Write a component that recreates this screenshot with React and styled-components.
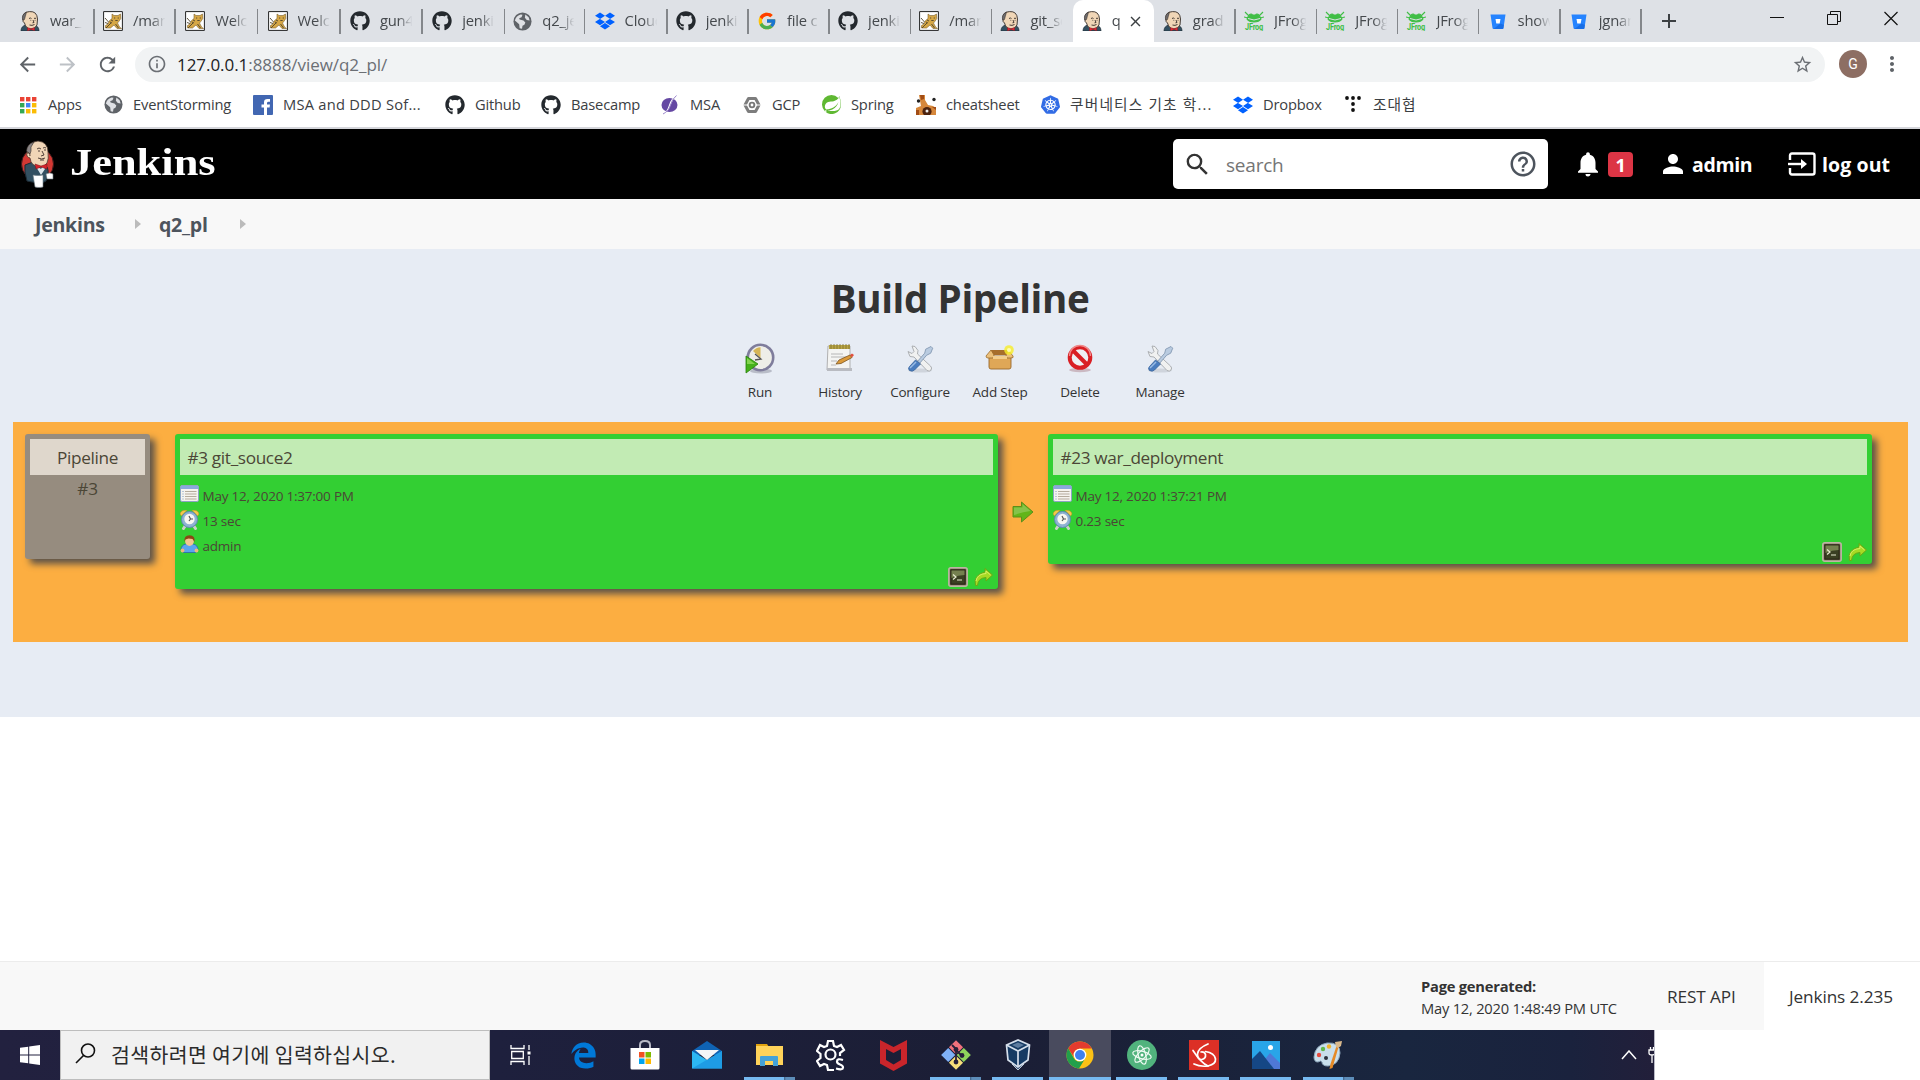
import React from "react";
import styled, { createGlobalStyle } from "styled-components";
import { FaGithub, FaDropbox, FaEdgeLegacy } from "react-icons/fa";
import { FcGoogle } from "react-icons/fc";
import { SiKubernetes, SiSpring } from "react-icons/si";
import {
  MdSearch, MdHelpOutline, MdNotifications, MdPerson, MdStarBorder, MdInfoOutline,
  MdRefresh, MdArrowBack, MdArrowForward, MdMoreVert, MdClose, MdAdd,
} from "react-icons/md";

const GlobalStyle = createGlobalStyle`
  * { box-sizing: border-box; }
  html, body { margin: 0; padding: 0; }
  body {
    background: #fff;
    color: #333;
    font-family: "Open Sans", "Noto Sans CJK KR", sans-serif;
    letter-spacing: -0.013em;
    overflow: hidden;
  }
  svg { display: block; flex: none; }
`;

const Screen = styled.div`
  width: 1920px;
  height: 1080px;
  display: flex;
  flex-direction: column;
  overflow: hidden;
`;

/* ---------- browser chrome ---------- */

const TabStrip = styled.div`
  height: 42px;
  flex: none;
  display: flex;
  background: #dee1e6;
  padding-left: 12px;
`;

const Tab = styled.div`
  width: ${(p) => (p.$wide ? 82.3 : 81.2)}px;
  height: 42px;
  flex: none;
  display: flex;
  align-items: center;
  gap: 10px;
  padding-left: ${(p) => (p.$first ? 8 : 8.7)}px;
  font-size: 14.8px;
  color: #45494d;
  border-radius: ${(p) => (p.$active ? "10px 10px 0 0" : "0")};
  background: ${(p) => (p.$active ? "#fff" : "transparent")};
`;

const TabTitle = styled.span`
  width: ${(p) => (p.$short ? 9 : 33)}px;
  flex: none;
  overflow: hidden;
  white-space: nowrap;
  line-height: 22px;
  margin-bottom: 2px;
  mask-image: linear-gradient(90deg, #000 ${(p) => (p.$short ? 80 : 55)}%, transparent 98%);
`;

const TabRule = styled.i`
  width: 1.5px;
  height: 25px;
  margin-left: ${(p) => (p.$first ? 0 : -1.5)}px;
  flex: none;
  background: ${(p) => (p.$hidden ? "transparent" : "#84878b")};
`;

const TabClose = styled(MdClose)`
  width: 17px;
  height: 17px;
  margin-left: -4px;
  color: #3c4043;
`;

const NewTab = styled(MdAdd)`
  width: 24px;
  height: 24px;
  margin: 9px 0 0 16px;
  color: #3c4043;
`;

const WindowButtons = styled.div`
  flex: 1;
  display: flex;
  justify-content: flex-end;
  align-items: flex-start;
  gap: 43px;
  padding: 11px 22px 0 0;
`;

const Toolbar = styled.div`
  height: 44px;
  flex: none;
  display: flex;
  align-items: center;
  padding-left: 16px;
  color: #5f6368;
`;

const NavButtons = styled.div`
  width: 119px;
  display: flex;
  gap: 17px;
  svg { width: 23px; height: 23px; }
  svg:nth-child(2) { color: #bdc1c6; }
`;

const Omnibox = styled.div`
  width: 1690px;
  height: 35px;
  display: flex;
  align-items: center;
  border-radius: 18px;
  background: #f1f3f4;
  padding: 0 12px;
  font-size: 17px;
  letter-spacing: -0.003em;
  color: #6b6f74;
  b { font-weight: 400; color: #202124; }
`;

const Url = styled.span`
  flex: 1;
  padding-left: 10px;
`;

const Avatar = styled.div`
  width: 28px;
  height: 28px;
  margin: 0 13px 0 14px;
  border-radius: 50%;
  background: #8d6e63;
  color: #fff;
  font: 14px/28px Roboto, sans-serif;
  text-align: center;
`;

const BookmarkBar = styled.div`
  height: 41px;
  flex: none;
  display: flex;
  padding: 0 0 4px 18px;
  font-size: 14.7px;
  color: #3c4043;
`;

const Bookmark = styled.div`
  width: ${(p) => p.$w}px;
  flex: none;
  display: flex;
  align-items: center;
  gap: 10px;
  white-space: nowrap;
  letter-spacing: ${(p) => p.$ls ?? -0.013}em;
`;

const BookmarkLabel = styled.span`
  padding-bottom: 2px;
`;

/* ---------- Jenkins ---------- */

const Header = styled.header`
  height: 72px;
  flex: none;
  display: flex;
  align-items: center;
  border-top: 2px solid #d5d6db;
  background: #000;
  color: #fff;
  padding-left: 20px;
`;

const Wordmark = styled.span`
  flex: 1;
  padding: 0 0 2px 16px;
  font: bold 37px/44px "Liberation Serif", serif;
  letter-spacing: 0;
  span { display: inline-block; transform: scaleX(1.2); transform-origin: left; }
`;

const SearchBox = styled.div`
  width: 375px;
  height: 50px;
  display: flex;
  align-items: center;
  border-radius: 5px;
  background: #fff;
  color: #333;
  padding: 0 10px;
`;

const Placeholder = styled.span`
  flex: 1;
  padding: 1px 0 0 14px;
  font-size: 19px;
  color: #757575;
`;

const HeaderLink = styled.div`
  width: ${(p) => p.$w}px;
  display: flex;
  align-items: center;
  gap: ${(p) => p.$gap}px;
  font-size: 19.5px;
  font-weight: 700;
  white-space: nowrap;
  letter-spacing: ${(p) => p.$ls ?? -0.018}em;
`;

const LinkText = styled.span`
  padding-top: 1px;
`;

const Spacer = styled.i`
  width: 20px;
`;

const Count = styled.span`
  width: 25px;
  height: 25px;
  border-radius: 4px;
  background: #dc3545;
  font-size: 18px;
  line-height: 26px;
  text-align: center;
`;

const Breadcrumbs = styled.nav`
  height: 50px;
  flex: none;
  display: flex;
  align-items: center;
  background: #f8f8f8;
  padding-left: 35px;
  font-size: 19.6px;
  font-weight: 700;
  letter-spacing: -0.014em;
  color: #4d545d;
`;

const Crumb = styled.span`
  width: ${(p) => p.$w}px;
  padding-top: 1px;
`;

const Caret = styled.i`
  width: 6px;
  margin-right: ${(p) => p.$gap || 0}px;
  border: solid transparent;
  border-width: 5px 0 5px 6px;
  border-left-color: #bbb;
`;

const Main = styled.main`
  height: 468px;
  flex: none;
  display: flex;
  flex-direction: column;
  align-items: center;
  background: #e7ecf4;
`;

const Title = styled.h1`
  margin: 20px 0 0;
  font-size: 38.6px;
  line-height: 58px;
  letter-spacing: -0.01em;
`;

const Actions = styled.div`
  display: flex;
  margin-top: 16px;
  height: 79px;
`;

const Action = styled.div`
  width: 80px;
  display: flex;
  flex-direction: column;
  align-items: center;
  gap: 7px;
  font-size: 13.5px;
  line-height: 20px;
`;

const Board = styled.section`
  width: 1895px;
  height: 220px;
  display: flex;
  align-items: flex-start;
  background: #fcae41;
  padding: 12px;
  margin-left: 1px;
`;

const Card = styled.article`
  width: ${(p) => p.$w}px;
  height: ${(p) => p.$h}px;
  flex: none;
  display: flex;
  flex-direction: column;
  border-radius: 3px;
  padding: 5px 5px 2px;
  background: ${(p) => (p.$idle ? "#968c7f" : "#33cf33")};
  text-align: ${(p) => (p.$idle ? "center" : "left")};
  margin-right: ${(p) => p.$gap || 0}px;
  box-shadow: 5px 5px 7px #5b5249;
  color: #4b4636;
`;

const CardTitle = styled.div`
  height: 36px;
  background: ${(p) => (p.$idle ? "#dfd7cc" : "#c2ebb4")};
  padding: 0 ${(p) => (p.$idle ? 0 : 7.5)}px;
  font-size: 17.2px;
  line-height: 37px;
  letter-spacing: -0.02em;
`;

const CardNote = styled.div`
  font-size: 17.2px;
  line-height: 27px;
`;

const Details = styled.div`
  flex: 1;
  padding-top: 9px;
`;

const Detail = styled.div`
  height: 25px;
  display: flex;
  gap: 3.5px;
  font-size: 13.5px;
  line-height: 25px;
  letter-spacing: -0.016em;
  svg { margin-top: 1px; }
`;

const CardTools = styled.div`
  display: flex;
  justify-content: flex-end;
  gap: 6px;
`;

const Connector = styled.div`
  width: 50px;
  height: 155px;
  display: flex;
  align-items: center;
  padding-left: 14px;
`;

const Blank = styled.div`
  height: 244px;
  flex: none;
`;

const Footer = styled.footer`
  height: 69px;
  flex: none;
  display: flex;
  align-items: center;
  border-top: 1px solid #ececec;
  background: #f8f8f8;
  font-size: 17.2px;
  font-weight: 500;
  letter-spacing: -0.006em;
`;

const Generated = styled.div`
  width: 246px;
  margin-left: 1421px;
  padding-top: 1px;
  font-size: 14.7px;
  font-weight: 400;
  line-height: 22px;
  letter-spacing: -0.015em;
`;

const RestLink = styled.div`
  width: 97px;
  padding-top: 1px;
  white-space: nowrap;
`;

const Version = styled.div`
  flex: 1;
  align-self: stretch;
  background: #fff;
  padding-left: 25px;
  line-height: 70px;
  white-space: nowrap;
`;

/* ---------- taskbar ---------- */

const Taskbar = styled.div`
  width: 1655px;
  height: 50px;
  flex: none;
  display: flex;
  background: linear-gradient(90deg, #22213f 0%, #1e203d 30%, #1b1e35 60%, #19263f 85%, #1a223d 95%, #221f3a 100%);
  border-right: 1px solid #b9bac6;
  overflow: hidden;
`;

const Start = styled.div`
  width: 60px;
  flex: none;
  display: flex;
  align-items: center;
  justify-content: center;
`;

const TaskSearch = styled.div`
  width: 430px;
  flex: none;
  display: flex;
  align-items: center;
  gap: 15px;
  background: #f1f1f1;
  border: 1px solid #bdbdbd;
  padding: 0 0 3px 14px;
  font: 20.5px "Noto Sans CJK KR", sans-serif;
  letter-spacing: 0.36px;
  color: #2b2b2b;
`;

const TaskItem = styled.div`
  width: 62.08px;
  height: 50px;
  flex: none;
  display: flex;
  flex-direction: column;
  align-items: center;
  background: ${(p) => (p.$active ? "#494b5e" : "transparent")};
`;

const TaskIcon = styled.div`
  height: 47px;
  display: flex;
  align-items: center;
  padding-top: 3px;
`;

const Underline = styled.div`
  width: ${(p) => (p.$active ? 62 : 51)}px;
  height: 3px;
  background: ${(p) => (p.$stacked ? "linear-gradient(90deg, #76b9f0 40px, #3f5f83 40px, #5d8db9 42px)" : "#76b9f0")};
`;

const Tray = styled.div`
  flex: 1;
  min-width: 0;
  display: flex;
  align-items: center;
  gap: 11px;
  padding-left: 262px;
`;

/* ---------- drawings ---------- */

const ButlerHead = () => (
  <svg width="20" height="20" viewBox="0 0 20 20">
    <path d="M1 20q0-5 5-6l8 0q5 1 5 6z" fill="#335061" stroke="#1d2b35" strokeWidth=".7" />
    <path d="M3 8Q2 1 9.500.6 17 0 17.500 8l-.5 6q-2 4-6 4-5 0-6.500-6Q2.500 11 3 8z" fill="#f0d6b7" stroke="#332b27" strokeWidth=".9" />
    <path d="M2.600 9Q1.500 3 6.500 1.200L5.300 5.500l-.8 3z" fill="#6d6b6d" stroke="#332b27" strokeWidth=".5" />
    <path d="M9 7.500q1.500-1 2.500 0M14 7.500q1-.8 2 0M10.500 9.300h.7M14.700 9.300h.7M13 9l1 2.500-1.500.3M9.500 14q2.500 1 5-.5" fill="none" stroke="#332b27" strokeWidth=".9" />
    <path d="M7.500 16.500l3.500 1.200 3.500-1.200.2 3.300-3.700-1.200L7.500 20z" fill="#e02b35" stroke="#81171e" strokeWidth=".4" />
  </svg>
);

const Butler = () => (
  <svg width="34" height="48" viewBox="0 0 34 48">
    <circle cx="17.500" cy="24" r="16" fill="#d33833" stroke="#3b1b1b" />
    <path d="M7 41Q4 31 5 25l8-3 11 3q5 1 4 10l-2 6-4 2-10-1z" fill="#335061" stroke="#1d2b35" />
    <path d="M7 13Q7 2 18 1q10 1 10 11 1 7-1 11-3 5-8 4-8-1-9-9-4-1-3-5z" fill="#f0d6b7" stroke="#4b3b31" strokeWidth=".8" />
    <path d="M6.500 11Q7 4 14 2l-3 5v4l-1 3z" fill="#8b8686" stroke="#332b27" strokeWidth=".6" />
    <path d="M7 13q3-1 3 3" fill="none" stroke="#4b3b31" />
    <path d="M17 9q2-2 4 0M23 8q2-1 3 0M18 11h2M24 10h2M22 11l2 4-3 1M18 18q4 2 7 0M20 20h4" fill="none" stroke="#3d302a" strokeWidth=".9" />
    <path d="M15 25l6 4 2-3 2 3-4 6z" fill="#dce5ea" />
    <path d="M15 24l6 2 6-2v5l-6-2-5 2z" fill="#d8222a" stroke="#74151a" strokeWidth=".5" />
    <path d="M13 35q5 1 10 0l0 12q-4 1-8 0z" fill="#fff" stroke="#6c7980" strokeWidth=".6" />
    <path d="M26 34q4-2 7 0v5h-6z" fill="#fff" stroke="#6c7980" strokeWidth=".6" />
  </svg>
);

const Tomcat = () => (
  <svg width="20" height="20" viewBox="0 0 20 20">
    <path d="M.6.6h18.800v18.800H.6z" fill="#fff" stroke="#222" strokeWidth="1" />
    <path d="M9 3l2 1.500h4L17.500 3l.3 4.500-2 3-1.300 1.500 2 4 2 1.500h-4.500L11 14l-3.500 3H2.500v-2.500L5 13q1-4 4-5.500z" fill="#d6a745" stroke="#7c6230" strokeWidth=".6" />
    <path d="M2 7l3.500 4M2 11.500l3 1M3 17l5-5M12.500 13l3 4M11 7h1.200M14.700 7h1.200M12.300 9.500h2.400M8 9l2 1M7 11l2 1" stroke="#4e432c" strokeWidth=".9" />
  </svg>
);

const Frog = () => (
  <svg width="20" height="20" viewBox="0 0 20 20">
    <path d="M1 1l4 4M19 1l-4 4M0 6l4 1M20 6l-4 1M5 5q0-2 2-2 1 0 1.500 1h3Q12 3 13 3q2 0 2 2 2 1 2 3-2 3-7 3T3 8q0-2 2-3z" fill="#40be46" stroke="#40be46" strokeWidth="1.100" />
    <path d="M4 7.500q6 3 12 0" fill="none" stroke="#dee1e6" />
    <text x="10" y="18.500" textAnchor="middle" textLength="18" lengthAdjust="spacingAndGlyphs" fontFamily="Roboto, sans-serif" fontSize="8.500" fontWeight="700" fill="#40be46">JFrog</text>
  </svg>
);

const Bucket = () => (
  <svg width="20" height="20" viewBox="0 0 20 20">
    <path d="M2.500 3.500h15L15.500 17q-.1 1-1 1h-9q-.9 0-1-1z" fill="#2684ff" />
    <path d="M12.500 12.500L15.900 14l-.4 3q-.1 1-1 1h-9z" fill="#0f5fd6" opacity=".6" />
    <path d="M7.500 8h5l-.8 4.500H8.300z" fill="#fff" />
  </svg>
);

const Globe = () => (
  <svg width="19" height="19" viewBox="0 0 20 20">
    <circle cx="10" cy="10" r="9.500" fill="#5f6368" />
    <path d="M2 9q1-5 6-6.500l2 .5-1 2.500-2.500 1L7 8l4 1 2 2-1 2.500-2 1-.5 3-2.500-.5-.5-4zM13 2.500l3.500 3L17.500 9l-3-.5-2-2.500z" fill="#dfe1e5" />
  </svg>
);

const AppsGrid = () => (
  <svg width="18" height="18" viewBox="0 0 18 18">
    {["#ea4335", "#ea4335", "#ea4335", "#34a853", "#4285f4", "#fbbc05", "#34a853", "#fbbc05", "#fbbc05"].map((c, i) => (
      <rect key={i} x={1 + (i % 3) * 6} y={1 + Math.floor(i / 3) * 6} width="4.400" height="4.400" fill={c} />
    ))}
  </svg>
);

const FacebookTile = () => (
  <svg width="20" height="20" viewBox="0 0 20 20">
    <rect width="20" height="20" rx="1" fill="#4267b2" />
    <path d="M11 20v-7.500H8.500v-3H11V7.300Q11 4 14.500 4H17v2.800h-1.500q-1.500 0-1.500 1.400v1.300h3l-.4 3H14V20z" fill="#fff" />
  </svg>
);

const Planet = () => (
  <svg width="18" height="20" viewBox="0 0 18 20">
    <ellipse cx="8.500" cy="10" rx="8" ry="7" fill="#6548a3" />
    <path d="M16 0Q10 3 8 10T1 20q6-3 8-9T16 0z" fill="#fff" />
    <path d="M15.500.5Q11 4 9.500 10T2 19" fill="none" stroke="#9c88cc" strokeWidth="1" />
  </svg>
);

const CloudHex = () => (
  <svg width="18" height="18" viewBox="0 0 18 18">
    <path d="M5.500 2.500h7L16 9l-3.500 6.500h-7L2 9z" fill="none" stroke="#7d7d7d" strokeWidth="3" strokeLinejoin="round" />
    <circle cx="9" cy="9" r="3.300" fill="#777" /><circle cx="9" cy="9" r="1.400" fill="#fff" />
    <path d="M0 9h4M14 9h4" stroke="#fff" strokeWidth="1" />
  </svg>
);

const Giraffe = () => (
  <svg width="20" height="20" viewBox="0 0 20 20">
    <path d="M3 0h6v5l3 5 5 1 3 2v7H0v-7l5-2z" fill="#d6873b" />
    <path d="M4 0h4v4L5 5zM0 15h3v5H0zM16 12h4v3z" fill="#a24d16" />
    <circle cx="11" cy="16.500" r="4.600" fill="#4d230e" /><circle cx="11" cy="16" r="1.500" fill="#eee" />
    <circle cx="2.500" cy="6" r="1.700" fill="#222" /><circle cx="18" cy="4.500" r="1.700" fill="#222" />
  </svg>
);

const DotsT = () => (
  <svg width="16" height="17" viewBox="0 0 16 17">
    {[[2, 2], [8, 2], [14, 2], [8, 8], [8, 14]].map(([x, y]) => <circle key={`${x}-${y}`} cx={x} cy={y} r="1.900" fill="#111" />)}
  </svg>
);

const LogoutIcon = () => (
  <svg width="28" height="24" viewBox="0 0 28 24" fill="none" stroke="#fff" strokeWidth="2.400">
    <path d="M2 8V3.500Q2 1.500 4 1.500h20.500q2 0 2 2v17q0 2-2 2H4q-2 0-2-2V16" />
    <path d="M0 12h15" /><path d="M13 7l6 5-6 5z" fill="#fff" stroke="none" />
  </svg>
);

const RunIcon = () => (
  <svg width="32" height="32" viewBox="0 0 32 32">
    <ellipse cx="17" cy="28" rx="11" ry="2.500" fill="#b9bdc8" />
    <circle cx="16.500" cy="14.500" r="12.700" fill="#eeeee8" stroke="#7f7d9c" strokeWidth="2.600" />
    <path d="M16.500 15L9 8q3-3.500 7.500-3.700z" fill="#d6b656" />
    <path d="M11 11l6 5-6 1" stroke="#555" strokeWidth="1.300" fill="none" />
    <path d="M2 13l12 8-12 9z" fill="#45b11a" stroke="#278109" strokeWidth=".8" />
    <path d="M3 15l8 6H3z" fill="#83d44f" />
  </svg>
);

const HistoryIcon = () => (
  <svg width="32" height="32" viewBox="0 0 32 32">
    <path d="M4 3h22v24H3z" fill="#f4f4f2" stroke="#b0b0b0" />
    <path d="M3 25h25v3H3z" fill="#b9bbc1" />
    <path d="M5 2h21v4H5z" fill="#b9a544" /><path d="M7 1v5M10 1v5M13 1v5M16 1v5M19 1v5M22 1v5M25 1v5" stroke="#7c7030" strokeWidth=".8" />
    <path d="M7 11h12M7 14h15M7 18h6M7 22h5" stroke="#b5b5b5" strokeWidth="1.200" />
    <path d="M12 21l3-4 11-5 2 2.500-11 6z" fill="#db9a3a" stroke="#7c531d" strokeWidth=".8" />
    <path d="M26 12l2-1.500 2 1.500-2 2.500z" fill="#e0503d" />
  </svg>
);

const ToolsIcon = () => (
  <svg width="32" height="32" viewBox="0 0 32 32">
    <ellipse cx="16" cy="27.500" rx="12" ry="2" fill="#cfd4dc" />
    <path d="M8 3l3 .5 3 4-.5 3.500 13 12q2 2 .5 4t-4 .5L10 14l-4-.5-2-5 4 2 2-2z" fill="#f0f1f1" stroke="#a5a8ac" strokeWidth=".9" />
    <path d="M27 3.500l1.700 1.700-2 5-4 2-7 8-2-2 7-8 1-4z" fill="#b9cbe0" stroke="#8398b2" strokeWidth=".9" />
    <path d="M11.500 17l5 4-6 6q-2 2-5 .5-2-2 0-4z" fill="#4a7dbf" stroke="#3a659c" strokeWidth=".8" />
    <path d="M12 19l-6 6" stroke="#9abce6" strokeWidth="1.500" />
  </svg>
);

const BoxIcon = () => (
  <svg width="32" height="32" viewBox="0 0 32 32">
    <path d="M5 13h22v11q0 2-2 2H7q-2 0-2-2z" fill="#dfa757" stroke="#9a692a" strokeWidth=".9" />
    <path d="M7 7h16l2 5H7z" fill="#a76e2c" />
    <path d="M7 7L2 13q0 2 2 2h5l1-3zM24 7l5 6q1 2-2 2h-4l-1-3z" fill="#ecc07a" stroke="#9a692a" strokeWidth=".8" />
    <path d="M9 13h14v3H9z" fill="#f2cd8d" />
    <circle cx="25" cy="7" r="4.800" fill="#f8ee27" opacity=".8" /><circle cx="25" cy="7" r="2" fill="#fffbb0" />
  </svg>
);

const StopIcon = () => (
  <svg width="32" height="32" viewBox="0 0 32 32">
    <ellipse cx="16" cy="27" rx="11" ry="2.200" fill="#cbb9c2" />
    <circle cx="16" cy="14.500" r="10.300" fill="#eef0f3" stroke="#d91f24" strokeWidth="4" />
    <path d="M9 7.500l14 14" stroke="#d91f24" strokeWidth="4" />
    <path d="M5.500 13A10.500 10.500 0 0 1 26.500 13" fill="none" stroke="#f08a8a" strokeWidth="1.300" />
  </svg>
);

const NotepadIcon = () => (
  <svg width="19" height="18" viewBox="0 0 19 18">
    <rect x=".5" y=".5" width="18" height="16" rx="1.500" fill="#f5f3ee" stroke="#8ca4c4" />
    <path d="M1 1h17v3H1z" fill="#8aa9dc" />
    <path d="M5 6.500h11.500M5 9h11.500M5 11.500h11.500M5 14h11.500" stroke="#b5ac9d" strokeWidth="1.100" />
    <path d="M2.500 6.500h1M2.500 9h1M2.500 11.500h1M2.500 14h1" stroke="#7797bf" strokeWidth="1.200" />
  </svg>
);

const ClockIcon = () => (
  <svg width="19" height="20" viewBox="0 0 19 20">
    <path d="M0 4Q1-.5 7 .3L1.500 6zM19 4Q18-.5 12 .3L17.500 6z" fill="#f2c84b" stroke="#c79422" strokeWidth=".6" />
    <path d="M3.500 18.500l2-3M15.500 18.500l-2-3" stroke="#c9d1c7" strokeWidth="3" strokeLinecap="round" />
    <circle cx="9.500" cy="9.500" r="8" fill="#8fb2d3" stroke="#5e88b2" />
    <circle cx="9.500" cy="9" r="5.200" fill="#f7f7f2" />
    <path d="M9 6l1.500 3-1.500 2M10.500 9H13" stroke="#555" strokeWidth="1.200" fill="none" />
  </svg>
);

const UserIcon = () => (
  <svg width="19" height="19" viewBox="0 0 19 19">
    <path d="M1 15q0-5 5-6h7q5 1 5 6l-2 2.500H3z" fill="#5aa4ee" stroke="#2a67ad" strokeWidth=".8" />
    <circle cx="2.500" cy="15.500" r="1.900" fill="#edb77c" /><circle cx="16.500" cy="15.500" r="1.900" fill="#edb77c" />
    <ellipse cx="9.500" cy="6" rx="4.400" ry="4.900" fill="#f3c591" />
    <path d="M4.500 7Q3.500.5 9.500.3q6 .2 5 6.700l-2-3-4-.5-3 1z" fill="#8b4715" />
  </svg>
);

const ConsoleIcon = () => (
  <svg width="20" height="20" viewBox="0 0 20 20">
    <rect x=".8" y=".8" width="18.400" height="18.400" rx="2" fill="#8c8068" stroke="#beb4a6" strokeWidth="1.500" />
    <rect x="2.800" y="2.800" width="14.400" height="14.400" fill="#3a3f22" stroke="#241d12" />
    <path d="M3.500 3.500h13V8q-6 0-13 3z" fill="#75804f" />
    <path d="M5 7.500l3 2.500-3 2.500M9 13h5" fill="none" stroke="#e8ebd1" strokeWidth="1.200" />
  </svg>
);

const RedoIcon = () => (
  <svg width="19" height="20" viewBox="0 0 19 20">
    <path d="M1.500 18.500Q-1 8 11 5V1.500L18.500 8 12 14v-3.500Q4 11 3.500 18.500z" fill="#a7da24" stroke="#69a815" />
    <path d="M2 14Q3 7 12 6.500V4l4.500 4" fill="none" stroke="#d8ef65" strokeWidth="1" />
  </svg>
);

const FlowArrow = () => (
  <svg width="23" height="24" viewBox="0 0 23 24">
    <path d="M1 6.500h8.500V2L21 12 9.500 22v-5H1z" fill="#62b519" stroke="#5f8c1b" />
    <path d="M2 7.500h8.500V4l8 7q-8 1-16.500 4z" fill="#92c85b" opacity=".75" />
  </svg>
);

const WindowsLogo = () => (
  <svg width="20" height="20" viewBox="0 0 20 20" fill="#fff">
    <path d="M0 2.800L8.200 1.700v7.800H0zM9.200 1.500L20 0v9.500H9.200zM0 10.500h8.200v7.800L0 17.200zM9.200 10.500H20V20L9.200 18.500z" />
  </svg>
);

const TaskLens = () => (
  <svg width="21" height="21" viewBox="0 0 21 21" fill="none" stroke="#111" strokeWidth="1.600">
    <circle cx="13" cy="7.500" r="6.500" /><path d="M8.500 12.500L1 20" />
  </svg>
);

const TaskViewIcon = () => (
  <svg width="22" height="20" viewBox="0 0 22 20" fill="none" stroke="#fff" strokeWidth="1.300">
    <path d="M1 0v3.500h13V0M1 20v-3.500h13V20M1.700 6.500h11.600v7H1.700zM19 0v5M19 11v9" /><path d="M17.500 6.500h3v3h-3z" fill="#fff" stroke="none" />
  </svg>
);

const StoreIcon = () => (
  <svg width="30" height="30" viewBox="0 0 30 30">
    <path d="M10 9V5q0-4 5-4t5 4v4" fill="none" stroke="#b9bac6" strokeWidth="2" />
    <path d="M.5 8h29v20q0 1.500-1.500 1.500H2Q.5 29.500.5 28z" fill="#fff" />
    <path d="M9 12h5.500v5.500H9z" fill="#f25022" /><path d="M15.500 12H21v5.500h-5.500z" fill="#7fba00" />
    <path d="M9 18.500h5.500V24H9z" fill="#00a4ef" /><path d="M15.500 18.500H21V24h-5.500z" fill="#ffb900" />
  </svg>
);

const MailIcon = () => (
  <svg width="30" height="28" viewBox="0 0 30 28">
    <path d="M0 10L15 0l15 10v4H0z" fill="#0f63b4" />
    <path d="M0 10l15 9L30 10v17.500H0z" fill="#2cb7f3" /><path d="M30 10v17.500H0z" fill="#1a93e0" opacity=".75" />
    <path d="M3 9h24l-12 10z" fill="#f3f5f7" />
  </svg>
);

const FolderIcon = () => (
  <svg width="29" height="24" viewBox="0 0 29 24">
    <path d="M1 1h11l2 3H1z" fill="#e0a20f" /><path d="M1 3h27v19H1z" fill="#ffd35a" />
    <path d="M5 23V14q0-1 1-1h16q1 0 1 1v9h-5v-5h-8v5z" fill="#45a2d8" />
  </svg>
);

const SettingsGear = () => (
  <svg width="30" height="32" viewBox="0 0 30 32">
    <path d="M18 31h-6l-1-5-3-1-4 2-3-5 3.500-3v-4L1 12l3-6 4 2 3-1 1-5h5l1 5 3 1 4-2 3 5-4 3v3" fill="none" stroke="#fff" strokeWidth="2.200" />
    <circle cx="14.500" cy="15.500" r="5" fill="none" stroke="#fff" strokeWidth="2.200" />
    <path d="M27 21q-6-2-6 1.500 0 2 3 3t3 3q0 3-7 1" fill="none" stroke="#fff" strokeWidth="2.200" />
  </svg>
);

const ShieldM = () => (
  <svg width="27" height="31" viewBox="0 0 27 31">
    <path d="M0 0l13.500 7L27 0v23.500L13.500 31 0 23.500zM6 9v11l7.500 4.500L21 20V9l-7.500 4z" fill="#c9252b" fillRule="evenodd" />
  </svg>
);

const GitIcon = () => (
  <svg width="32" height="32" viewBox="0 0 32 32">
    <g transform="rotate(45 16 16)">
      <path d="M5.500 5.500h10v10h-10z" fill="#f0717c" /><path d="M16.500 5.500h10v10h-10z" fill="#8ed45c" />
      <path d="M5.500 16.500h10v10h-10z" fill="#7fb1f7" /><path d="M16.500 16.500h10v10h-10z" fill="#f7df7a" />
    </g>
    <path d="M16 10v13M16 11l6 6M12 6l4 4" stroke="#26203a" strokeWidth="1.800" /><circle cx="16" cy="10.500" r="2.400" fill="#26203a" /><circle cx="16" cy="23" r="2.400" fill="#26203a" /><circle cx="22" cy="16.500" r="2.400" fill="#26203a" />
  </svg>
);

const VirtualBoxIcon = () => (
  <svg width="26" height="32" viewBox="0 0 26 32">
    <path d="M7 25l6 6 6-6z" fill="#43597c" stroke="#b9c7d6" strokeWidth="1" />
    <path d="M1.500 6L13 1l11.500 5-1.500 15-10 7-10-7z" fill="#153a63" stroke="#d5dfeb" strokeWidth="1.700" />
    <path d="M1.500 6L13 12l11.500-6M13 12v16" fill="none" stroke="#d5dfeb" strokeWidth="1.700" />
    <path d="M7 6l6-2.500L19 6l-6 3z" fill="#5d7c9f" />
  </svg>
);

const ChromeIcon = () => (
  <svg width="28" height="28" viewBox="0 0 28 28">
    <circle cx="14" cy="14" r="13.500" fill="#fbc116" />
    <path d="M2.200 7.500A13.500 13.500 0 0 1 25.800 7.500H14a6.500 6.500 0 0 0-6.200 8.500z" fill="#e33b2e" />
    <path d="M2.200 7.300A13.500 13.500 0 0 0 13 27.500l6.300-10.300a6.500 6.500 0 0 1-11.400 0z" fill="#229f4b" />
    <circle cx="14" cy="14" r="6.300" fill="#fff" /><circle cx="14" cy="14" r="5" fill="#3f80ee" />
  </svg>
);

const AtomIcon = () => (
  <svg width="30" height="30" viewBox="0 0 30 30">
    <circle cx="15" cy="15" r="15" fill="#51b37d" />
    <g fill="none" stroke="#eefaf2" strokeWidth="1.200">
      <ellipse cx="15" cy="15" rx="9.500" ry="3.700" transform="rotate(15 15 15)" />
      <ellipse cx="15" cy="15" rx="9.500" ry="3.700" transform="rotate(75 15 15)" />
      <ellipse cx="15" cy="15" rx="9.500" ry="3.700" transform="rotate(135 15 15)" />
    </g>
    <circle cx="15" cy="15" r="1.500" fill="#fff" />
  </svg>
);

const RedSwirl = () => (
  <svg width="30" height="30" viewBox="0 0 30 30">
    <path d="M0 0h30v30H0z" fill="#dc3026" />
    <g fill="none" stroke="#fff" strokeWidth="1.700" strokeLinecap="round">
      <path d="M4 10.500Q12 23 19 26q8-2 7.500-7-1-6-10-7.500" />
      <path d="M19 4q-10 4-10.500 10 0 6 4.500 5.500 4-1 3.500-5-1-3-4.500-2.500" />
      <path d="M19 26q-8 1-14-2" />
    </g>
  </svg>
);

const PhotosIcon = () => (
  <svg width="28" height="28" viewBox="0 0 28 28">
    <path d="M0 0h28v28H0z" fill="#29a5e8" /><path d="M10 22l8-10 10 10v6H6z" fill="#4f78d6" />
    <path d="M0 18l8-8 14 18H0z" fill="#154785" /><circle cx="18.500" cy="6.500" r="2.500" fill="#fff" />
  </svg>
);

const PaintIcon = () => (
  <svg width="30" height="30" viewBox="0 0 30 30">
    <path d="M1 17Q2 5 14 3q13-1 13 10-1 12-12 13-6 0-6-4-1-2-4 0-4 0-4-5z" fill="#c9dfec" stroke="#8ea8bc" />
    <circle cx="6" cy="15" r="2.200" fill="#e44b3e" /><circle cx="10" cy="9" r="2.200" fill="#61b84a" />
    <circle cx="16" cy="6.500" r="2.200" fill="#f1b32d" /><circle cx="13" cy="18" r="2" fill="#2c333e" />
    <path d="M23.500 6l2 1-6 21-3 1 1-5z" fill="#e58a26" /><path d="M22 2l7-1-1 5-3 2-2-1z" fill="#d9b98c" />
  </svg>
);

const PlugIcon = () => (
  <svg width="14" height="16" viewBox="0 0 14 16" fill="none" stroke="#fff" strokeWidth="1.300">
    <path d="M1 3h6v3q0 2-3 2t-3-2zM2.500 0v3M5.500 0v3M4 8v8M7 11v5" />
  </svg>
);

/* ---------- data ---------- */

const tabs = [
  ["war_d", ButlerHead], ["/man", Tomcat], ["Welco", Tomcat], ["Welco", Tomcat], ["gun4", "gh"],
  ["jenkin", "gh"], ["q2_je", Globe], ["Cloud", "db"], ["jenkin", "gh"], ["file c", "goog"],
  ["jenkin", "gh"], ["/man", Tomcat], ["git_so", ButlerHead], ["q", ButlerHead], ["grad", ButlerHead],
  ["JFrog", Frog], ["JFrog", Frog], ["JFrog", Frog], ["show", Bucket], ["jgnan", Bucket],
];

const brand = {
  gh: <FaGithub size={20} color="#24292e" />,
  db: <FaDropbox size={20} color="#0061ff" />,
  goog: <FcGoogle size={20} />,
};

const bookmarks = [
  ["Apps", 85, <AppsGrid />], ["EventStorming", 150, <Globe />, -0.012], ["MSA and DDD Sof...", 192, <FacebookTile />, 0.016],
  ["Github", 96, brand.gh], ["Basecamp", 119, brand.gh], ["MSA", 82, <Planet />], ["GCP", 79, <CloudHex />],
  ["Spring", 95, <SiSpring size={19} color="#5fb832" />], ["cheatsheet", 124, <Giraffe />],
  ["쿠버네티스 기초 학...", 193, <SiKubernetes size={19} color="#326ce5" />, 0.08], ["Dropbox", 110, brand.db],
  ["조대협", 90, <DotsT />, 0.07],
];

const IconBox = styled.span`
  width: 20px;
  flex: none;
  display: flex;
  justify-content: center;
`;

const actions = [
  ["Run", RunIcon], ["History", HistoryIcon], ["Configure", ToolsIcon],
  ["Add Step", BoxIcon], ["Delete", StopIcon], ["Manage", ToolsIcon],
];

const tasks = [
  [<TaskViewIcon />], [<FaEdgeLegacy size={27} color="#0078d7" />], [<StoreIcon />], [<MailIcon />],
  [<FolderIcon />, "stacked"], [<SettingsGear />], [<ShieldM />], [<GitIcon />, "stacked"],
  [<VirtualBoxIcon />, "open"], [<ChromeIcon />, "active"], [<AtomIcon />, "open"],
  [<RedSwirl />, "open"], [<PhotosIcon />, "open"], [<PaintIcon />, "stacked"],
];

function BuildCard({ title, w, h, rows }) {
  return (
    <Card $w={w} $h={h}>
      <CardTitle>{title}</CardTitle>
      <Details>
        {rows.map(([Icon, text]) => <Detail key={text}><Icon />{text}</Detail>)}
      </Details>
      <CardTools><ConsoleIcon /><RedoIcon /></CardTools>
    </Card>
  );
}

export default function App() {
  return (
    <Screen>
      <GlobalStyle />
      <TabStrip>
        {tabs.map(([title, Icon], i) => (
          <Tab key={i} $first={i === 0} $wide={i < 5} $active={i === 13}>
            {typeof Icon === "string" ? brand[Icon] : <Icon />}
            <TabTitle $short={i === 13}>{title}</TabTitle>
            {i === 13 ? <TabClose /> : <TabRule $first={i === 0} $hidden={i === 12} />}
          </Tab>
        ))}
        <NewTab />
        <WindowButtons>
          <svg width="14" height="16"><path d="M0 6.500h14" stroke="#111" /></svg>
          <svg width="14" height="15" fill="none" stroke="#111"><path d="M.5 3.500h10v10H.5zM3.500 3.500v-3h10v10h-3" /></svg>
          <svg width="14" height="15" fill="none" stroke="#111" strokeWidth="1.200"><path d="M.5 1l13 13M13.500 1l-13 13" /></svg>
        </WindowButtons>
      </TabStrip>

      <Toolbar>
        <NavButtons><MdArrowBack /><MdArrowForward /><MdRefresh /></NavButtons>
        <Omnibox>
          <MdInfoOutline size={20} />
          <Url><b>127.0.0.1</b>:8888/view/q2_pl/</Url>
          <MdStarBorder size={21} />
        </Omnibox>
        <Avatar>G</Avatar>
        <MdMoreVert size={24} />
      </Toolbar>

      <BookmarkBar>
        {bookmarks.map(([label, w, icon, ls]) => (
          <Bookmark key={label} $w={w} $ls={ls}>
            <IconBox>{icon}</IconBox>
            <BookmarkLabel>{label}</BookmarkLabel>
          </Bookmark>
        ))}
      </BookmarkBar>

      <Header>
        <Butler />
        <Wordmark><span>Jenkins</span></Wordmark>
        <SearchBox>
          <MdSearch size={29} />
          <Placeholder>search</Placeholder>
          <MdHelpOutline size={30} color="#4d545d" />
        </SearchBox>
        <HeaderLink $w={110} $gap={5}><Spacer /><MdNotifications size={30} /><Count>1</Count></HeaderLink>
        <HeaderLink $w={130} $gap={4}><MdPerson size={30} /><LinkText>admin</LinkText></HeaderLink>
        <HeaderLink $w={132} $gap={6} $ls={0.005}><LogoutIcon /><LinkText>log out</LinkText></HeaderLink>
      </Header>

      <Breadcrumbs>
        <Crumb $w={100}>Jenkins</Crumb><Caret $gap={18} />
        <Crumb $w={81}>q2_pl</Crumb><Caret />
      </Breadcrumbs>

      <Main>
        <Title>Build Pipeline</Title>
        <Actions>
          {actions.map(([label, Icon]) => <Action key={label}><Icon />{label}</Action>)}
        </Actions>
        <Board>
          <Card $idle $w={125} $h={125} $gap={25}>
            <CardTitle $idle>Pipeline</CardTitle>
            <CardNote>#3</CardNote>
          </Card>
          <BuildCard
            title="#3 git_souce2"
            w={823}
            h={155}
            rows={[[NotepadIcon, "May 12, 2020 1:37:00 PM"], [ClockIcon, "13 sec"], [UserIcon, "admin"]]}
          />
          <Connector><FlowArrow /></Connector>
          <BuildCard
            title="#23 war_deployment"
            w={824}
            h={130}
            rows={[[NotepadIcon, "May 12, 2020 1:37:21 PM"], [ClockIcon, "0.23 sec"]]}
          />
        </Board>
      </Main>

      <Blank />

      <Footer>
        <Generated><b>Page generated:</b><br />May 12, 2020 1:48:49 PM UTC</Generated>
        <RestLink>REST API</RestLink>
        <Version>Jenkins 2.235</Version>
      </Footer>

      <Taskbar>
        <Start><WindowsLogo /></Start>
        <TaskSearch><TaskLens />검색하려면 여기에 입력하십시오.</TaskSearch>
        {tasks.map(([icon, state], i) => (
          <TaskItem key={i} $active={state === "active"}>
            <TaskIcon>{icon}</TaskIcon>
            {state && <Underline $active={state === "active"} $stacked={state === "stacked"} />}
          </TaskItem>
        ))}
        <Tray>
          <svg width="16" height="10" fill="none" stroke="#fff" strokeWidth="1.500"><path d="M1 9l7-8 7 8" /></svg>
          <PlugIcon />
        </Tray>
      </Taskbar>
    </Screen>
  );
}
